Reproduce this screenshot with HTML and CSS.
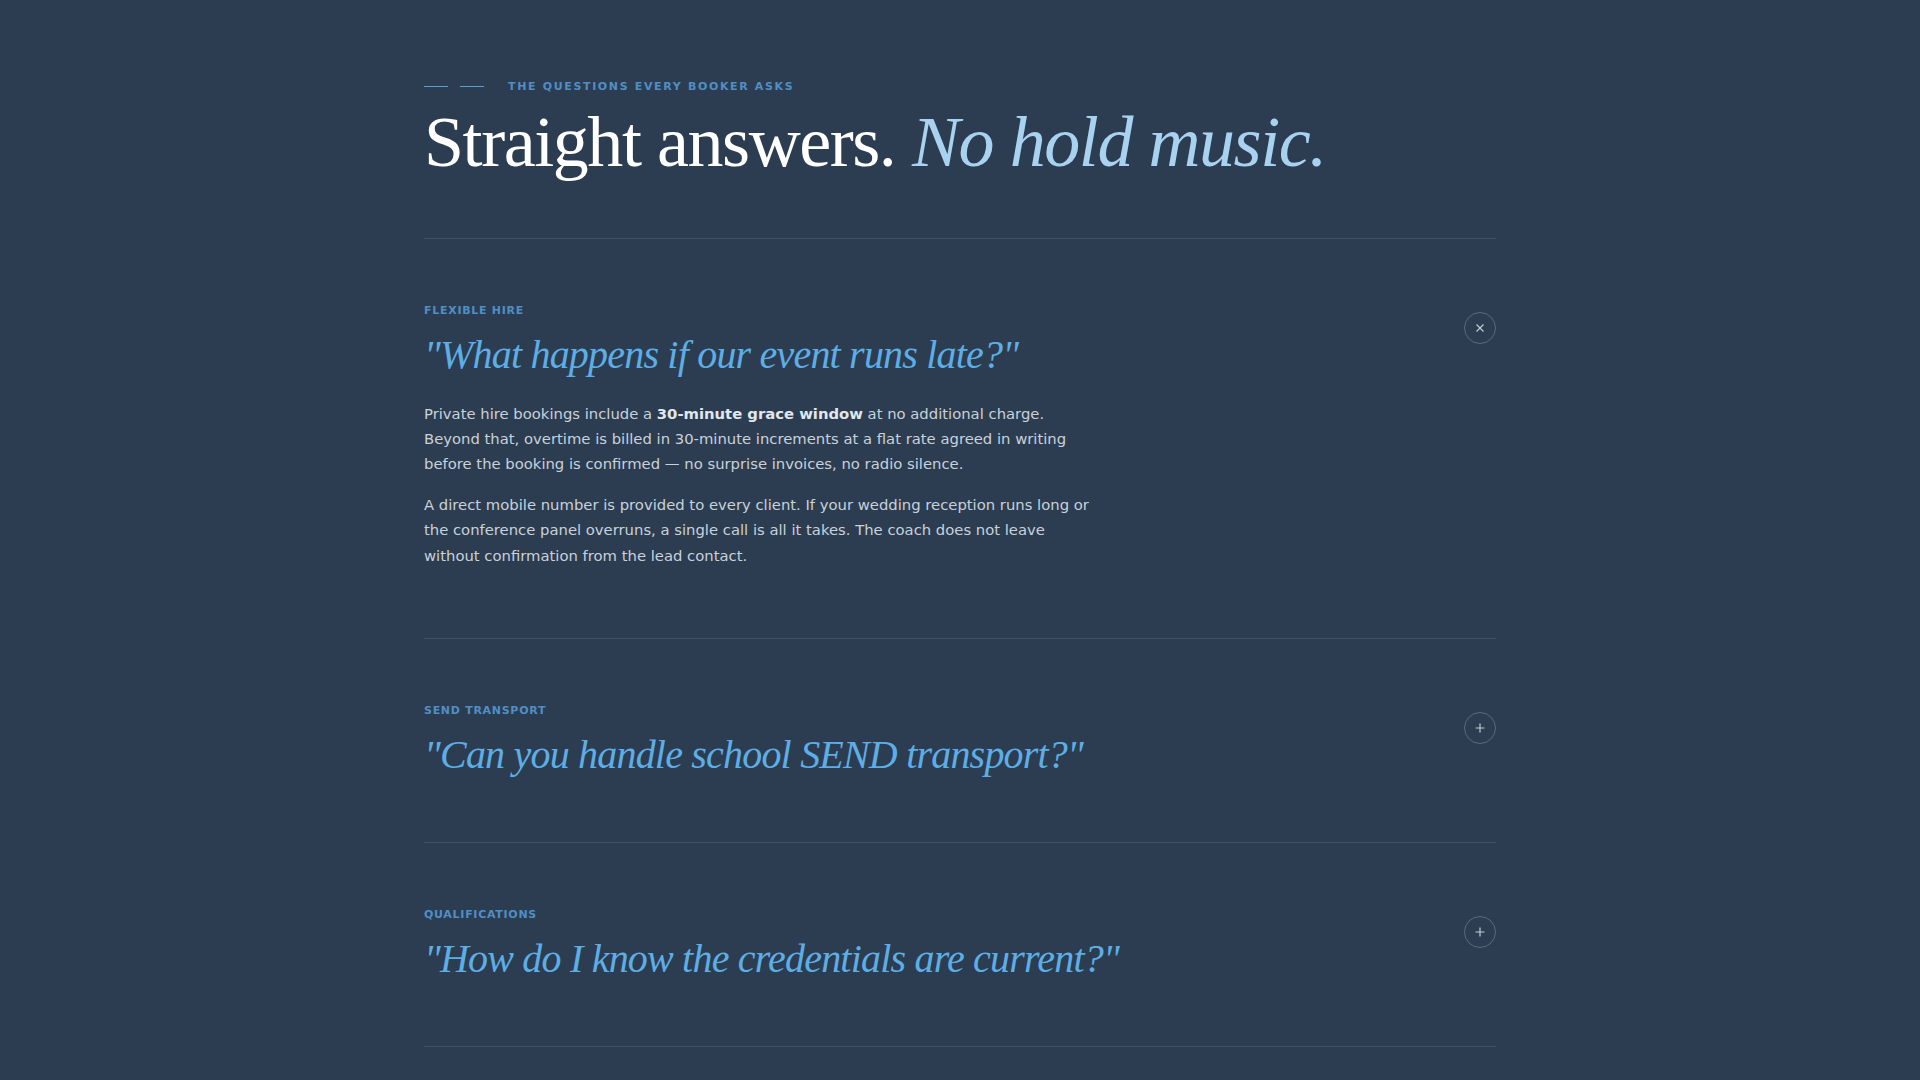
FILE: index.html
```html
<!DOCTYPE html>
<html lang="en">
  <head>
    <meta charset="UTF-8" />
    <meta name="viewport" content="width=device-width, initial-scale=1.0" />
    <title>FAQ — Straight answers</title>
    <link rel="stylesheet" href="styles.css">
  </head>
  <body>
    <section class="faq">
      <header class="faq-head">
        <div class="eyebrow">
          <span class="dash"></span>
          <span class="dash"></span>
          <span class="eyebrow-text">The questions every booker asks</span>
        </div>
        <h1 class="title">Straight answers. <em>No hold music.</em></h1>
      </header>

      <div class="item open">
        <div class="item-head">
          <div>
            <div class="tag">Flexible hire</div>
            <h2 class="question">"What happens if our event runs late?"</h2>
          </div>
          <button class="toggle" aria-label="Close">
            <svg viewBox="0 0 12 12" width="12" height="12"><path d="M2.5 2.5l7 7M9.5 2.5l-7 7" /></svg>
          </button>
        </div>
        <div class="answer">
          <p>Private hire bookings include a <strong>30-minute grace window</strong> at no additional charge. Beyond that, overtime is billed in 30-minute increments at a flat rate agreed in writing before the booking is confirmed — no surprise invoices, no radio silence.</p>
          <p>A direct mobile number is provided to every client. If your wedding reception runs long or the conference panel overruns, a single call is all it takes. The coach does not leave without confirmation from the lead contact.</p>
        </div>
      </div>

      <div class="item">
        <div class="item-head">
          <div>
            <div class="tag">Send transport</div>
            <h2 class="question">"Can you handle school SEND transport?"</h2>
          </div>
          <button class="toggle" aria-label="Open">
            <svg viewBox="0 0 12 12" width="12" height="12"><path d="M6 1.5v9M1.5 6h9" /></svg>
          </button>
        </div>
      </div>

      <div class="item">
        <div class="item-head">
          <div>
            <div class="tag">Qualifications</div>
            <h2 class="question">"How do I know the credentials are current?"</h2>
          </div>
          <button class="toggle" aria-label="Open">
            <svg viewBox="0 0 12 12" width="12" height="12"><path d="M6 1.5v9M1.5 6h9" /></svg>
          </button>
        </div>
      </div>
    </section>
  </body>
</html>
```

FILE: styles.css
```css
body {
  margin: 0;
  background-color: #2c3d51;
  color: #c9d1da;
  font-family: "DejaVu Sans", sans-serif;
}
.faq {
  width: 1072px;
  margin: 0 auto;
  padding-top: 78px;
}
.faq-head {
  padding-bottom: 57px;
  border-bottom: 1px solid rgba(255, 255, 255, 0.1);
}
.eyebrow {
  display: flex;
  align-items: center;
  height: 16px;
}
.dash {
  width: 24px;
  height: 1px;
  background-color: #5a9bd0;
  margin-right: 12px;
}
.eyebrow-text {
  margin-left: 12px;
  font-size: 11px;
  font-weight: bold;
  letter-spacing: 0.15em;
  text-transform: uppercase;
  color: #4f8fc6;
}
.title {
  margin: 11px 0 0;
  font-family: "Liberation Serif", serif;
  font-weight: normal;
  font-size: 72px;
  line-height: 1.05;
  letter-spacing: -0.02em;
  color: #ffffff;
}
.title em {
  color: #a9d2f1;
}
.item {
  padding: 64px 0;
  border-bottom: 1px solid rgba(255, 255, 255, 0.1);
}
.item.open {
  padding-bottom: 70px;
}
.item-head {
  display: flex;
  justify-content: space-between;
  align-items: flex-start;
}
.tag {
  font-size: 11px;
  font-weight: bold;
  letter-spacing: 0.065em;
  text-transform: uppercase;
  color: #4f8fc6;
  line-height: 16px;
}
.question {
  margin: 13px 0 0;
  font-family: "Liberation Serif", serif;
  font-style: italic;
  font-weight: normal;
  font-size: 40px;
  line-height: 1.15;
  letter-spacing: -0.02em;
  color: #5eaee6;
}
.toggle {
  width: 32px;
  height: 32px;
  margin-top: 9px;
  padding: 0;
  border: 1px solid rgba(255, 255, 255, 0.22);
  border-radius: 50%;
  background: none;
  display: flex;
  align-items: center;
  justify-content: center;
}
.toggle svg {
  fill: none;
  stroke: #c2cbd6;
  stroke-width: 1.2;
}
.answer {
  margin-top: 23px;
  max-width: 680px;
}
.answer p {
  margin: 0 0 16px;
  font-size: 14.8px;
  line-height: 25.2px;
}
.answer p:last-child {
  margin-bottom: 0;
}
.answer strong {
  color: #e2e7ed;
}
```
